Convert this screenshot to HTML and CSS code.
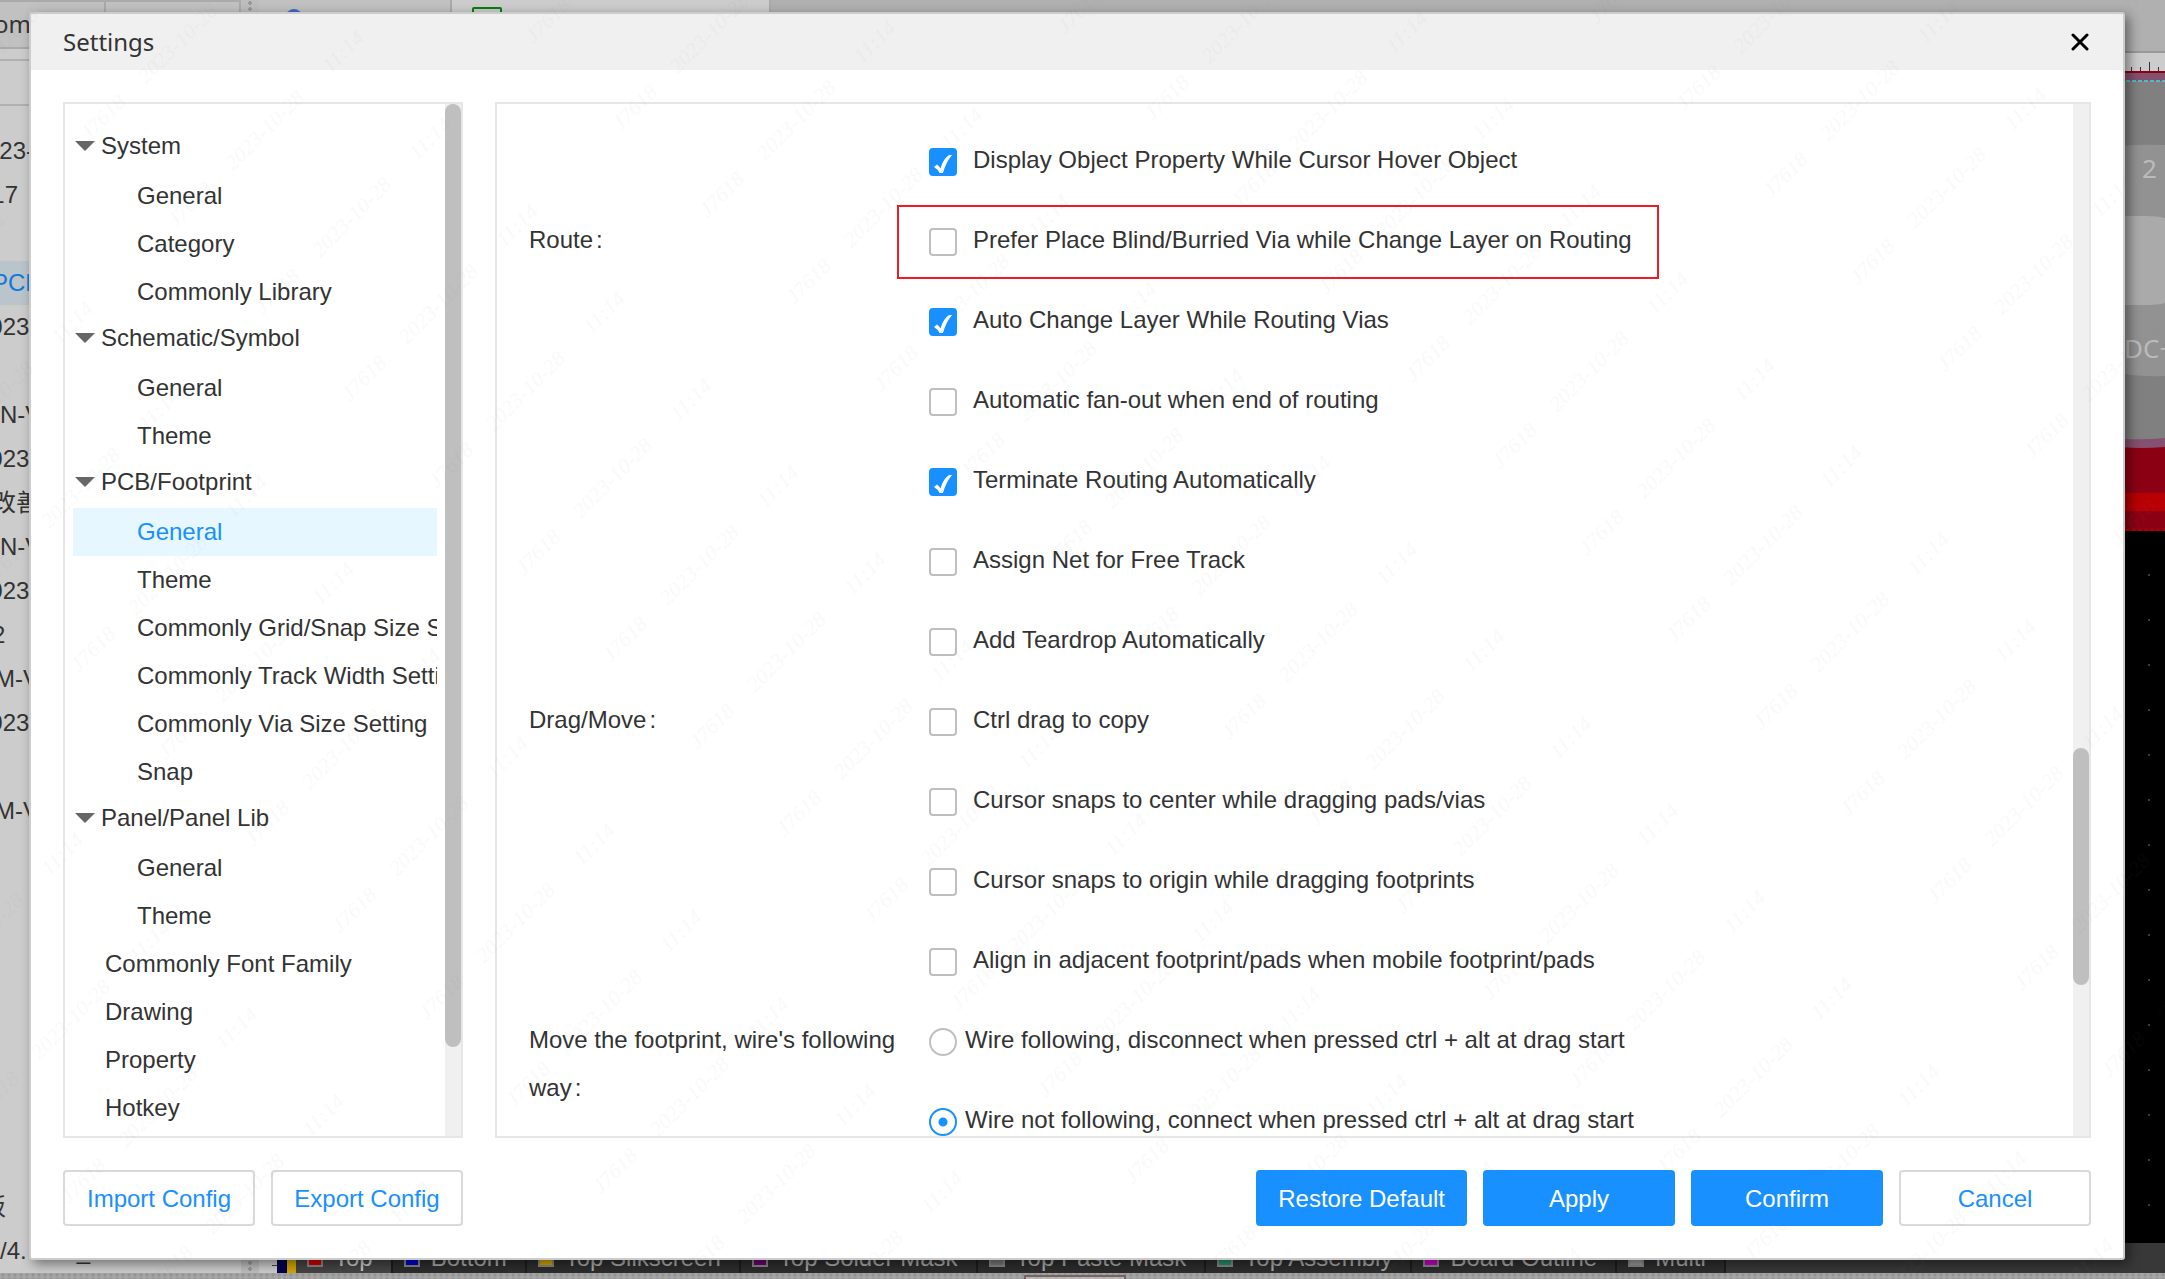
FILE: index.html
```html
<!DOCTYPE html>
<html lang="en">
<head>
<meta charset="utf-8">
<title>Settings</title>
<link rel="stylesheet" href="styles.css">
</head>
<body>
<div class="app">
  <div class="workspace">
    <aside class="sidebar">
      <div class="toolbar"><div class="toolbar-tab">omp</div><div class="toolbar-tab"></div></div>
      <div class="filter"></div>
      <ul class="projects">
        <li class="from-digit">023-</li>
        <li class="from-digit">017</li>
        <li></li>
        <li class="current">PCB</li>
        <li>2023</li>
        <li></li>
        <li class="from-n">N-V</li>
        <li>2023</li>
        <li class="from-two">改善</li>
        <li class="from-n">N-V</li>
        <li>2023</li>
        <li class="from-two">2</li>
        <li class="from-m">M-V</li>
        <li>2023</li>
        <li></li>
        <li class="from-m">M-V</li>
        <li></li><li></li><li></li><li></li><li></li><li></li><li></li><li></li>
        <li class="from-cjk">板</li>
        <li class="from-n"><span>/4.</span><span class="tail">_</span></li>
      </ul>
    </aside>
    <div class="splitter"></div>
    <main class="editor">
      <div class="doc-tabs">
        <div class="doc-tab"><svg width="16" height="16"><circle cx="8" cy="8" r="8" fill="#4169c8"/></svg></div>
        <div class="doc-tab doc-tab-open"><svg width="30" height="30"><rect x="1" y="1" width="28" height="28" rx="1" fill="none" stroke="#0a7d0a" stroke-width="2"/></svg></div>
      </div>
      <div class="canvas">
        <svg class="board" width="45" height="1192" aria-hidden="true">
          <rect width="45" height="2" fill="#999"/>
          <rect y="2" width="45" height="18" fill="#ccc"/>
          <path d="M11.500 16v4M20.500 16v4M29.500 11v9M38.500 16v4" stroke="#333"/>
          <rect y="20" width="45" height="378" fill="#8c0014"/>
          <rect y="22" width="45" height="375" fill="#865070"/>
          <path d="M0 30H45V387Q25 389 0 388Z" fill="#808080"/>
          <path d="M0 30H45" stroke="#5bb" stroke-width="2" stroke-dasharray="4 2"/>
          <path d="M0 95Q20 93 45 94V325Q20 326 0 322Z" fill="#929292"/>
          <path d="M0 165H25Q37 165 45 167V252Q37 254 25 254H0Z" fill="#aaa"/>
          <path d="M0 388Q20 391 45 388V396Q20 398 0 396Z" fill="#865070"/>
          <path d="M0 396Q20 398 45 396V480H0Z" fill="#8c0014"/>
          <rect y="442" width="45" height="18" fill="#b80004"/>
          <path d="M0 479H45" stroke="#c00" stroke-dasharray="4 2"/>
          <text x="22" y="127" class="pad-name">2</text>
          <text x="4" y="307" class="pad-name">DC+</text>
          <path d="M29 523.500V1192" stroke="#777" stroke-width="2" stroke-dasharray="1 44"/>
        </svg>
      </div>
      <div class="layers">
        <span class="ruler-end"></span><span class="edge-navy"></span><span class="edge-gold"></span>
        <div class="layer layer-active"><i class="swatch red"></i>Top</div>
        <div class="layer"><i class="swatch blue"></i>Bottom</div>
        <div class="layer"><i class="swatch gold"></i>Top Silkscreen</div>
        <div class="layer"><i class="swatch purple"></i>Top Solder Mask</div>
        <div class="layer"><i class="swatch gray"></i>Top Paste Mask</div>
        <div class="layer"><i class="swatch green"></i>Top Assembly</div>
        <div class="layer"><i class="swatch magenta"></i>Board Outline</div>
        <div class="layer"><i class="swatch silver"></i>Multi</div>
      </div>
    </main>
  </div>
  <div class="statusbar"><div class="handle"></div></div>
</div>

<section class="dialog" role="dialog" aria-labelledby="dialog-title">
  <header class="dialog-head">
    <h1 id="dialog-title">Settings</h1>
    <button class="close" type="button" aria-label="Close"><svg width="18" height="18" viewBox="0 0 18 18"><path d="M2 2L16 16M16 2L2 16" stroke="#000" stroke-width="3" stroke-linecap="round"/></svg></button>
  </header>
  <div class="dialog-body">
    <nav class="panel tree">
      <div class="tree-view">
        <a class="node branch" href="#system">System</a>
        <a class="node child" href="#system-general">General</a>
        <a class="node child" href="#system-category">Category</a>
        <a class="node child" href="#system-library">Commonly Library</a>
        <a class="node branch" href="#schematic">Schematic/Symbol</a>
        <a class="node child" href="#schematic-general">General</a>
        <a class="node child" href="#schematic-theme">Theme</a>
        <a class="node branch" href="#pcb">PCB/Footprint</a>
        <a class="node child selected" href="#pcb-general" aria-current="page">General</a>
        <a class="node child" href="#pcb-theme">Theme</a>
        <a class="node child" href="#pcb-grid">Commonly Grid/Snap Size Setting</a>
        <a class="node child" href="#pcb-track">Commonly Track Width Setting</a>
        <a class="node child" href="#pcb-via">Commonly Via Size Setting</a>
        <a class="node child" href="#pcb-snap">Snap</a>
        <a class="node branch" href="#panel">Panel/Panel Lib</a>
        <a class="node child" href="#panel-general">General</a>
        <a class="node child" href="#panel-theme">Theme</a>
        <a class="node leaf" href="#font">Commonly Font Family</a>
        <a class="node leaf" href="#drawing">Drawing</a>
        <a class="node leaf" href="#property">Property</a>
        <a class="node leaf" href="#hotkey">Hotkey</a>
      </div>
      <div class="scrollbar"><div class="thumb thumb-tree"></div></div>
    </nav>
    <form class="panel content">
      <div class="content-view">
        <div class="group">
          <div class="group-name"></div>
          <div class="options">
            <label class="option"><input type="checkbox" checked>Display Object Property While Cursor Hover Object</label>
          </div>
        </div>
        <div class="group" role="group" aria-labelledby="g-route">
          <div class="group-name" id="g-route">Route<span class="colon">:</span></div>
          <div class="options">
            <label class="option marked"><input type="checkbox">Prefer Place Blind/Burried Via while Change Layer on Routing</label>
            <label class="option"><input type="checkbox" checked>Auto Change Layer While Routing Vias</label>
            <label class="option"><input type="checkbox">Automatic fan-out when end of routing</label>
            <label class="option"><input type="checkbox" checked>Terminate Routing Automatically</label>
            <label class="option"><input type="checkbox">Assign Net for Free Track</label>
            <label class="option"><input type="checkbox">Add Teardrop Automatically</label>
          </div>
        </div>
        <div class="group" role="group" aria-labelledby="g-drag">
          <div class="group-name" id="g-drag">Drag/Move<span class="colon">:</span></div>
          <div class="options">
            <label class="option"><input type="checkbox">Ctrl drag to copy</label>
            <label class="option"><input type="checkbox">Cursor snaps to center while dragging pads/vias</label>
            <label class="option"><input type="checkbox">Cursor snaps to origin while dragging footprints</label>
            <label class="option"><input type="checkbox">Align in adjacent footprint/pads when mobile footprint/pads</label>
          </div>
        </div>
        <div class="group" role="radiogroup" aria-labelledby="g-wire">
          <div class="group-name" id="g-wire">Move the footprint, wire's following way<span class="colon">:</span></div>
          <div class="options">
            <label class="option choice"><input type="radio" name="wire">Wire following, disconnect when pressed ctrl + alt at drag start</label>
            <label class="option choice"><input type="radio" name="wire" checked>Wire not following, connect when pressed ctrl + alt at drag start</label>
          </div>
        </div>
      </div>
      <div class="scrollbar"><div class="thumb thumb-content"></div></div>
    </form>
  </div>
  <footer class="dialog-foot">
    <button class="btn" type="button">Import Config</button>
    <button class="btn" type="button">Export Config</button>
    <span class="spacer"></span>
    <button class="btn primary" type="button">Restore Default</button>
    <button class="btn primary" type="button">Apply</button>
    <button class="btn primary" type="button">Confirm</button>
    <button class="btn" type="button">Cancel</button>
  </footer>
</section>

<svg class="watermark" aria-hidden="true">
  <defs>
    <pattern id="stamp" width="383" height="123" patternUnits="userSpaceOnUse" patternTransform="rotate(-45) translate(-60 -29)">
      <text x="50" y="69">J7618</text>
      <text x="155" y="69">2023-10-28</text>
      <text x="266" y="69">11:14</text>
    </pattern>
  </defs>
  <rect width="100%" height="100%" fill="url(#stamp)"/>
</svg>
</body>
</html>
```
FILE: styles.css
```css
*, *::before, *::after { box-sizing: border-box; }

body {
  margin: 0;
  height: 100vh;
  overflow: hidden;
  position: relative;
  font: 24px/48px "Liberation Sans", Arial, "Noto Sans CJK SC", sans-serif;
  color: #333;
}

/* Editor behind the dialog */
.app { height: 100%; display: flex; flex-direction: column; background: #ccc; }
.workspace { flex: 1; min-height: 0; display: flex; }
.sidebar { width: 241px; overflow: hidden; }
.toolbar {
  height: 49px;
  display: flex;
  border: 2px solid #aaa;
  border-left: 0;
  background: #c1c1c1;
  font-family: "Noto Sans", sans-serif;
}
.toolbar-tab { width: 106px; border-right: 2px solid #aaa; line-height: 44px; text-indent: -6px; }
.toolbar-tab:last-child { border: 0; }
.filter { margin-top: 10px; height: 47px; border: solid #b0b0b0; border-width: 2px 0; }
.projects { list-style: none; margin: 23px 0 0; padding: 0; line-height: 44px; }
.projects li { height: 44px; text-indent: -24px; white-space: nowrap; }
.projects .current { background: #b9c5cb; color: #1478d8; text-indent: -8px; }
.projects .from-digit { text-indent: -14px; }
.projects .from-n { text-indent: 0; }
.projects .from-m { text-indent: -5px; }
.projects .from-two { text-indent: -8px; }
.projects .from-cjk { text-indent: -18px; }
.projects .from-digit + .from-digit { text-indent: -22px; }
.tail { margin-left: 50px; }
.splitter { width: 18px; background: #bdbdbd radial-gradient(circle, #999 2px, transparent 2px) 6px 0 / 6px 6px repeat-y; }

.editor { flex: 1; min-width: 0; display: flex; flex-direction: column; background: #b0b0b0; }
.doc-tabs { height: 51px; display: flex; }
.doc-tab { width: 193px; padding: 9px 27px; line-height: 0; background: #c1c1c1; border-right: 2px solid #aaa; }
.doc-tab-open { width: 319px; padding: 7px 20px; background: #ccc; }
.canvas { flex: 1; min-height: 0; overflow: hidden; display: flex; justify-content: flex-end; background: #000; }
.board { display: block; }
.pad-name { font: 26px "Noto Sans", sans-serif; fill: #bbb; }

.layers { height: 30px; display: flex; background: #383838; color: #aaa; line-height: 30px; }
.ruler-end { width: 18px; background: #ccc linear-gradient(#444, #444) 100% 22px / 5px 1px no-repeat; }
.edge-navy { width: 10px; background: #000050; }
.edge-gold { width: 9px; background: #d0a400; }
.layer {
  display: flex;
  align-items: center;
  gap: 11px;
  padding: 0 18px 0 11px;
  background: #2d2d2d;
  border-right: 2px solid #1c1c1c;
  white-space: nowrap;
}
.layer-active { background: #444; color: #ccc; }
.swatch { width: 16px; height: 18px; border: 2px solid #888; }
.red { background: #d00000; }
.blue { background: #0000d0; }
.gold { background: #d0a400; }
.purple { background: #700070; }
.gray { background: #777; }
.green { background: #20906c; }
.magenta { background: #c800c8; }
.silver { background: #999; }
.statusbar {
  height: 6px;
  overflow: hidden;
  background: #a6a6a6 radial-gradient(circle, #959595 1px, transparent 2px) 0 0 / 6px 4px;
}
.handle { width: 102px; height: 20px; margin: 2px 0 0 1024px; border: 2px solid #7a6468; background: #b8b4b4; }

/* Dialog */
.dialog {
  position: absolute;
  inset: 12px 40px 19px 29px;
  display: flex;
  flex-direction: column;
  background: #fff;
  border: 2px solid #ccc;
  border-radius: 3px;
  box-shadow: 4px 4px 12px rgba(0, 0, 0, .45);
}
.dialog-head {
  height: 56px;
  display: flex;
  align-items: center;
  justify-content: space-between;
  padding: 0 32px;
  background: #f0f0f0;
}
.dialog-head h1 { margin: 0; font: 24px/56px "Noto Sans", sans-serif; }
.close { display: flex; padding: 2px; border: 0; background: none; }
.dialog-body { flex: 1; min-height: 0; display: flex; gap: 32px; padding: 32px 32px 0; }
.panel { display: flex; border: 2px solid #e6e6e6; }
.scrollbar { width: 16px; background: #f0f0f0; }
.thumb { border-radius: 8px; background: #bfbfbf; }
.thumb-tree { height: 91.4%; }
.thumb-content { position: relative; top: 62.4%; height: 23%; }

.tree { width: 400px; }
.tree-view { flex: 1; min-width: 0; overflow: hidden; padding: 20px 8px 0; }
.node {
  display: block;
  height: 48px;
  overflow: hidden;
  white-space: nowrap;
  color: inherit;
  text-decoration: none;
}
.child { padding-left: 64px; }
.leaf { padding-left: 32px; }
.branch { display: flex; align-items: center; gap: 6px; padding-left: 2px; line-height: 44px; height: 44px; margin-bottom: 4px; }
.branch::before {
  content: "";
  border: solid transparent;
  border-width: 10px 10px 0;
  border-top-color: #666;
}
.selected { background: #e6f7ff; color: #1890ff; }

.content { flex: 1; min-width: 0; margin: 0; }
.content-view { flex: 1; min-width: 0; overflow: hidden; padding: 16px 32px 0; }
.group { display: grid; grid-template-columns: 400px 1fr; }
.group-name { padding: 16px 24px 16px 0; }
.colon { margin-left: 3px; }
.option { position: relative; height: 80px; display: flex; align-items: center; gap: 16px; }
.choice { gap: 8px; }
.option input {
  appearance: none;
  width: 28px;
  height: 28px;
  margin: 4px 0 0;
  border: 2px solid #bfbfbf;
  border-radius: 4px;
  background: #fff;
}
.option input[type="checkbox"]:checked {
  border-color: #1890ff;
  background: #1890ff url("data:image/svg+xml,%3Csvg xmlns='http://www.w3.org/2000/svg' viewBox='0 0 28 28'%3E%3Cpath d='M5 19L8 16.500Q10 18 11.500 20.500Q14 11 20 7L23 7Q17 14 14 25H10.500Q8.500 21 5 19Z' fill='white'/%3E%3C/svg%3E") center / 28px 28px no-repeat;
}
.option input[type="radio"] { border-radius: 50%; }
.option input[type="radio"]:checked {
  border-color: #1890ff;
  background: radial-gradient(circle, #1890ff 4px, #fff 5px);
}
/* Callout frame round one option */
.marked::after {
  content: "";
  position: absolute;
  left: -32px;
  top: 5px;
  width: 762px;
  height: 74px;
  border: 2px solid #ed1c24;
}

.dialog-foot { display: flex; gap: 16px; padding: 32px; }
.spacer { flex: 1; }
.btn {
  min-width: 192px;
  height: 56px;
  padding: 2px 20px 0;
  border: 2px solid #d9d9d9;
  border-radius: 4px;
  background: #fff;
  color: #1890ff;
  font: inherit;
}
.primary { border-color: #1890ff; background: #1890ff; color: #fff; }

.watermark {
  position: absolute;
  inset: 0;
  width: 100%;
  height: 100%;
  pointer-events: none;
}
.watermark text { font: italic 22px "Liberation Serif", serif; fill: #808080; fill-opacity: .05; text-anchor: middle; }
```
